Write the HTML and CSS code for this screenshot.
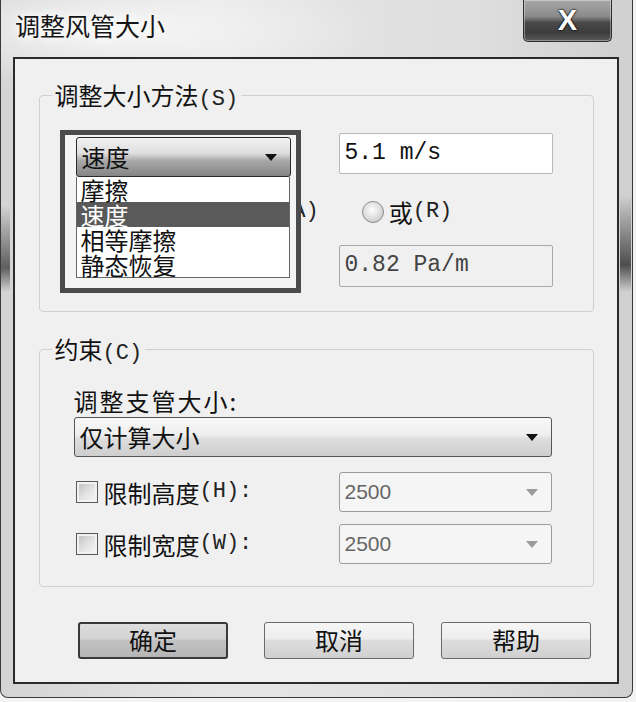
FILE: index.html
```html
<!DOCTYPE html>
<html>
	<head>
		<meta charset="UTF-8">
		<title>调整风管大小</title>
		<link rel="stylesheet" href="styles.css">
	</head>
	<body>
		<div class="window">
			<div class="titlebar">
				<span class="title">调整风管大小</span>
				<span class="close">X</span>
			</div>

			<div class="client">
				<!-- 调整大小方法 -->
				<fieldset class="group">
					<legend>调整大小方法<span class="key">(S)</span></legend>
					<div class="group-body method">
						<div class="row-top">
							<div class="pick">
								<div class="mark"></div>
								<div class="combo combo-open">
									<span>速度</span><i class="arrow"></i>
								</div>
								<!-- 展开的下拉列表 -->
								<ul class="list">
									<li>摩擦</li>
									<li class="sel">速度</li>
									<li>相等摩擦</li>
									<li>静态恢复</li>
								</ul>
							</div>
							<div class="field">5.1 m/s</div>
						</div>

						<div class="row-radio">
							<label class="radio"><i></i>仅<span class="key">(O)</span></label>
							<label class="radio radio-and"><i></i>和<span class="key">(A)</span></label>
							<label class="radio radio-or"><i></i>或<span class="key">(R)</span></label>
						</div>

						<div class="row-bottom">
							<div class="field field-off">0.82 Pa/m</div>
						</div>
					</div>
				</fieldset>

				<!-- 约束 -->
				<fieldset class="group group-limit">
					<legend>约束<span class="key">(C)</span></legend>
					<div class="group-body limit">
						<div class="caption">调整支管大小:</div>
						<div class="combo combo-wide">
							<span>仅计算大小</span><i class="arrow"></i>
						</div>
						<div class="check-row">
							<label class="check"><i></i>限制高度<span class="key">(H):</span></label>
							<div class="combo combo-off"><span>2500</span><i class="arrow"></i></div>
						</div>
						<div class="check-row check-row2">
							<label class="check"><i></i>限制宽度<span class="key">(W):</span></label>
							<div class="combo combo-off"><span>2500</span><i class="arrow"></i></div>
						</div>
					</div>
				</fieldset>

				<div class="buttons">
					<span class="btn btn-default">确定</span>
					<span class="btn">取消</span>
					<span class="btn">帮助</span>
				</div>
			</div>
		</div>
	</body>
</html>
```

FILE: styles.css
```css
*{box-sizing: border-box;}
body{margin: 0; background: #f3f3f3; color: #111;
	font-family: "Noto Sans CJK SC", sans-serif;}

/* 窗口外框 */
.window{width: 633px; height: 698px; border: 1px solid #3a3a3a; border-top: none;
	border-radius: 0 0 8px 8px;
	background:
		linear-gradient(to bottom, transparent 195px, rgba(55,55,55,.85) 265px, transparent 292px) right 1px top 0 / 11px 100% no-repeat,
		linear-gradient(to bottom, transparent 205px, rgba(55,55,55,.75) 268px, transparent 292px) left 0 top 0 / 9px 100% no-repeat,
		radial-gradient(ellipse 260px 60px at 120px 30px, #f7f7f7, transparent),
		linear-gradient(90deg, #d4d4d4, #e6e6e6 35%, #dedede 75%, #d0d0d0);}
.titlebar{height: 57px; display: flex; align-items: flex-start;}
.title{margin: 12px 0 0 14px; font-size: 25px; line-height: 27px; color: #151515;
	text-shadow: 0 0 8px #fff, 0 0 12px #fff;}
.close{margin-left: auto; margin-right: 20px; width: 89px; height: 42px;
	border: 1px solid #2e2e2e; border-top: none; border-radius: 0 0 5px 5px;
	background: linear-gradient(#a8a8a8, #8a8a8a 40%, #4a4a4a 55%, #3c3c3c 80%, #5a5a5a);
	box-shadow: inset 0 0 0 1px rgba(255,255,255,.35);
	color: #fff; text-align: center; font: bold 29px/40px "Liberation Sans", sans-serif;
	text-shadow: 0 0 2px #000, 0 0 2px #000;}

/* 客户区 */
.client{margin-left: 12px; width: 606px; height: 627px; border: 2px solid #2b2b2b;
	background: #f0f0f0; display: flex; flex-direction: column; align-items: center;}

.group{margin: 23px 0 0 0; width: 555px; padding: 0; border: 1px solid #cfcfcf;
	border-radius: 4px;}
.group legend{margin-left: 12px; padding: 0 3px; height: 26px; font-size: 24px; line-height: 26px;}
.group-limit{margin-top: 24px;}
.key{font: 22px/1 "Liberation Mono", monospace; color: #222;}

.group-body{display: flex; flex-direction: column;}
.method{padding: 25px 40px 24px 36px;}
.limit{padding: 25px 41px 22px 34px;}

/* 第一组 */
.row-top{display: flex; justify-content: space-between; align-items: flex-start; height: 44px;}
.pick{position: relative; width: 215px; margin-top: 4px;}
.mark{position: absolute; left: -16px; top: -7px; width: 241px; height: 163px;
	border: 5px solid #4b4b4b; background: #f4f4f4;}
.combo{position: relative; height: 40px; border: 1px solid #555; border-radius: 3px;
	padding-left: 5px; font-size: 24px; line-height: 38px;
	background: linear-gradient(#f8f8f8, #eeeeee 45%, #dddddd 55%, #cecece);}
.combo-open{border-color: #2a2a2a;
	background: linear-gradient(#f2f2f2, #dedede 40%, #a8a8a8 60%, #858585);}
.arrow{position: absolute; right: 13px; top: 16px; width: 0; height: 0;
	border-left: 6px solid transparent; border-right: 6px solid transparent;
	border-top: 7px solid #111;}
.list{position: absolute; left: 0; top: 40px; width: 214px; margin: 0; padding: 0;
	list-style: none; background: #fff; border: 1px solid #666; border-top: none;}
.list li{height: 25px; line-height: 25px; padding-left: 4px; font-size: 24px;}
.list li.sel{background: #5a5a5a; color: #fff;}

.field{width: 214px; height: 41px; border: 1px solid #b8b8b8; border-radius: 2px;
	background: #fff; padding-left: 5px;
	font: 23px/39px "Liberation Mono", monospace; color: #111;}
.field-off{height: 42px; background: #f0f0f0; border-color: #a8a8a8; color: #444;}

.row-radio{display: flex; align-items: center; height: 27px; margin-top: 21px;
	font-size: 24px; line-height: 27px;}
.radio{display: flex; align-items: center; white-space: nowrap;}
.radio i{width: 22px; height: 22px; margin-right: 5px; border: 1px solid #8c8c8c;
	border-radius: 50%;
	background: radial-gradient(circle at 45% 40%, #fdfdfd, #dcdcdc 55%, #b8b8b8);}
.radio-and{margin-left: 62px;}
.radio-or{margin-left: 43px;}
.row-bottom{display: flex; justify-content: flex-end; margin-top: 20px;}

/* 第二组 */
.caption{font-size: 24px; line-height: 27px; letter-spacing: 2px;}
.combo-wide{margin-top: 3px;}
.check-row{display: flex; justify-content: space-between; align-items: center;
	margin-top: 15px; height: 40px;}
.check-row2{margin-top: 12px;}
.check{display: flex; align-items: center; margin-left: 2px; font-size: 24px; line-height: 27px;}
.check i{width: 22px; height: 22px; margin-right: 6px; border: 1px solid #5a5a5a;
	background: linear-gradient(135deg, #bdbdbd, #e4e4e4 55%, #f8f8f8);
	box-shadow: inset 0 0 0 2px #f2f2f2;}
.combo-off{width: 213px; border-color: #9c9c9c; background: #f5f5f5;
	font: 21px/38px "Liberation Sans", sans-serif; color: #666;}
.combo-off .arrow{border-top-color: #9a9a9a;}

/* 按钮 */
.buttons{display: flex; align-self: stretch; justify-content: flex-end;
	margin-top: 35px; padding-right: 26px; gap: 27px;}
.btn{width: 150px; height: 37px; border: 1px solid #6a6a6a; border-radius: 3px;
	text-align: center; font-size: 24px; line-height: 34px;
	background: linear-gradient(#f6f6f6, #ededed 45%, #dddddd 50%, #d0d0d0);}
.btn-default{margin-right: 9px; border: 2px solid #3a3a3a; line-height: 32px;
	background: linear-gradient(#dedede, #d2d2d2 45%, #c2c2c2 50%, #b6b6b6);}
```
